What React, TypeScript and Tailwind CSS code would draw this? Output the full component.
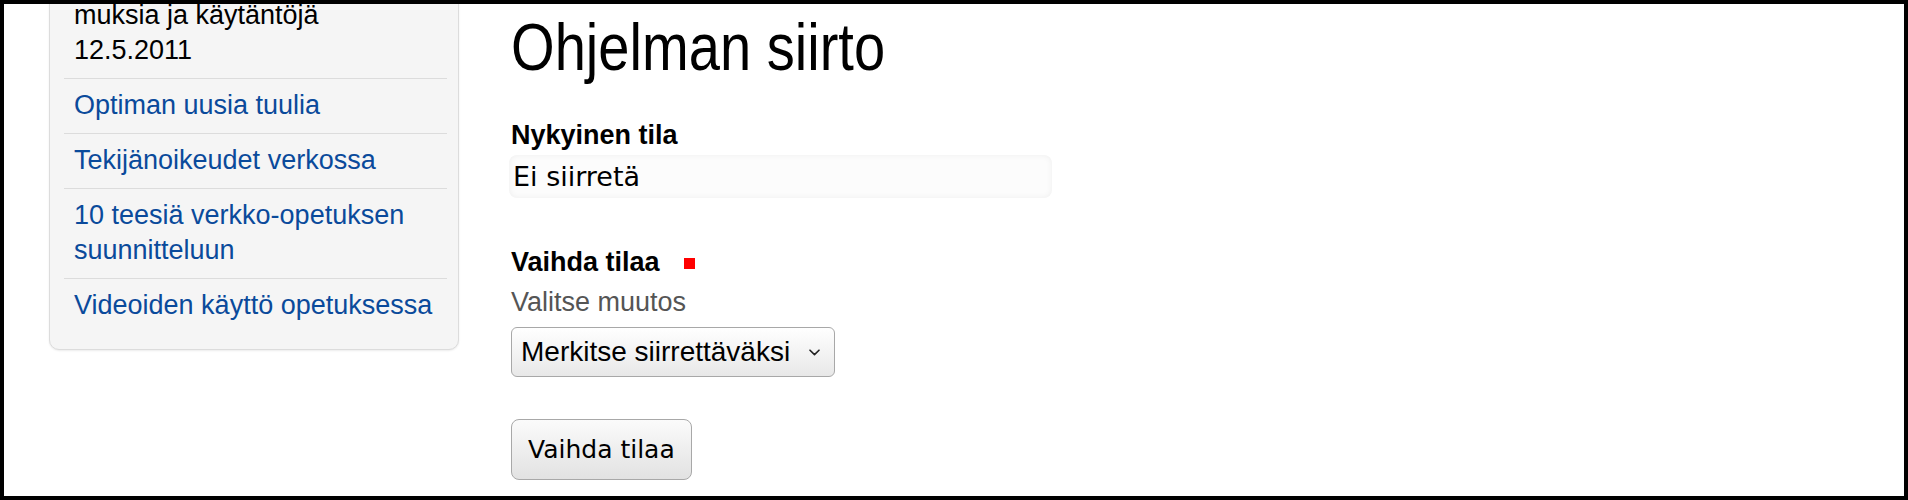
const sideLinks = [
  { id: 1, lines: ["Optiman uusia tuulia"] },
  { id: 2, lines: ["Tekijänoikeudet verkossa"] },
  { id: 3, lines: ["10 teesiä verkko-opetuksen", "suunnitteluun"] },
  { id: 4, lines: ["Videoiden käyttö opetuksessa"] },
];

export default function App() {
  return (
    <div className="h-[500px] w-[1908px] overflow-hidden border-4 border-black bg-white">
      <div className="flex items-start">
        {/* Sidebar news box, top scrolled out of view */}
        <aside className="-mt-[7px] ml-[45px] w-[410px] shrink-0 rounded-b-[10px] border border-[#dcdcdc] bg-[#f5f5f5] pb-[16px] pl-[14px] pr-[11px] font-['Liberation_Sans',Arial,sans-serif] text-[27px] leading-[35px] shadow-[0_1px_2px_rgba(0,0,0,0.08)]">
          <div className="pb-[10px] pl-[10px] text-black">
            <div>muksia ja käytäntöjä</div>
            <div>12.5.2011</div>
          </div>
          {sideLinks.map((item) => (
            <div key={item.id} className="border-t border-[#dcdcdc] pb-[10px] pl-[10px] pt-[9px]">
              <a href="#" className="text-[#0a4a9b]">
                {item.lines.map((line) => (
                  <div key={line}>{line}</div>
                ))}
              </a>
            </div>
          ))}
        </aside>

        {/* Main content */}
        <main className="ml-[52px] flex flex-col items-start font-['Liberation_Sans',Arial,sans-serif] text-[27px] leading-[32px] text-black">
          <h1 className="mt-[10px] origin-left scale-x-[0.85] font-['Liberation_Sans',Arial,sans-serif] text-[66px] font-normal leading-none">
            Ohjelman siirto
          </h1>

          <h2 className="mt-[39px] font-bold">Nykyinen tila</h2>
          <div className="-ml-[2px] mt-[4px] h-[43px] w-[543px] rounded-lg bg-[#fcfcfc] py-[6px] pl-[4px] font-['DejaVu_Sans',sans-serif] text-[27px] leading-[31px] shadow-[inset_0_0_6px_rgba(0,0,0,0.06)]">
            Ei siirretä
          </div>

          <div className="mt-[48px] flex items-center">
            <h2 className="font-bold">Vaihda tilaa</h2>
            <span className="ml-[24px] mt-[2px] inline-block h-[11px] w-[11px] bg-[#f00]" />
          </div>
          <p className="mt-[8px] text-[#555]">Valitse muutos</p>

          <div className="mt-[9px] flex h-[50px] w-[324px] items-center justify-between rounded-[6px] border border-[#a8a8a8] bg-gradient-to-b from-white to-[#e8e8e8] pl-[9px] pr-[14px] text-[28px]">
            <span>Merkitse siirrettäväksi</span>
            <svg width="11" height="7" viewBox="0 0 11 7" fill="none">
              <path d="M1 1.2 5.5 5.6 10 1.2" stroke="#222" strokeWidth="1.6" strokeLinecap="round" strokeLinejoin="round" />
            </svg>
          </div>

          <button className="mt-[42px] h-[61px] rounded-[8px] border border-[#a8a8a8] bg-gradient-to-b from-[#fbfbfb] to-[#e2e2e2] px-[16px] font-['DejaVu_Sans',sans-serif] text-[25px] leading-none text-black">
            Vaihda tilaa
          </button>
        </main>
      </div>
    </div>
  );
}
